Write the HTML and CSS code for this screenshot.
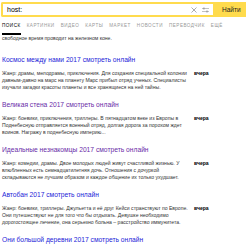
FILE: index.html
```html
<!DOCTYPE html>
<html lang="ru">
<head>
<meta charset="utf-8">
<link rel="stylesheet" href="styles.css">
</head>
<body>
<header class="head">
  <div class="search">
    <div class="field">
      <span class="query">host:</span>
      <span class="clear">
        <svg width="6" height="6" viewBox="0 0 6 6"><path d="M0.5 0.5L5.5 5.5M5.5 0.5L0.5 5.5" stroke="#888" stroke-width="0.7" fill="none"/></svg>
      </span>
      <span class="filter">
        <svg width="7" height="6" viewBox="0 0 7 6"><path d="M0 1.5H7M0 4.5H7" stroke="#999" stroke-width="0.6"/><rect x="1.2" y="0.6" width="1.4" height="1.8" fill="#999"/><rect x="4.3" y="3.6" width="1.4" height="1.8" fill="#999"/></svg>
      </span>
    </div>
    <div class="btn">Найти</div>
  </div>
  <nav class="tabs">
    <span class="tab active">Поиск</span>
    <span class="tab">Картинки</span>
    <span class="tab">Видео</span>
    <span class="tab">Карты</span>
    <span class="tab">Маркет</span>
    <span class="tab">Новости</span>
    <span class="tab">Переводчик</span>
    <span class="tab">Ещё</span>
  </nav>
</header>
<main class="results">
  <div class="intro">свободное время проводит на железном коне.</div>

  <div class="result">
    <a class="title">Космос между нами 2017 смотреть онлайн</a>
    <div class="body">
      <p class="snippet">Жанр: драмы, мелодрамы, приключения. Для создания специальной колонии<br>давным-давно на марс на планету Марс прибыл отряд ученых. Специалисты<br>изучали загадки красоты планеты и все хранящиеся на ней тайны.</p>
      <span class="date">вчера</span>
    </div>
  </div>

  <div class="result">
    <a class="title visited">Великая стена 2017 смотреть онлайн</a>
    <div class="body">
      <p class="snippet">Жанр: боевики, приключения, триллеры. В пятнадцатом веке из Европы в<br>Поднебесную отправляется военный отряд, долгая дорога за порохом ждет<br>воинов. Награжу в поднебесную империю...</p>
      <span class="date">вчера</span>
    </div>
  </div>

  <div class="result">
    <a class="title visited">Идеальные незнакомцы 2017 смотреть онлайн</a>
    <div class="body">
      <p class="snippet">Жанр: комедии, драмы. Двое молодых людей живут счастливой жизнью. У<br>влюбленных есть семнадцатилетняя дочь. Отношения с дочуркой<br>складываются не лучшим образом и каждое общение их только ухудшает.</p>
      <span class="date">вчера</span>
    </div>
  </div>

  <div class="result">
    <a class="title">Автобан 2017 смотреть онлайн</a>
    <div class="body">
      <p class="snippet">Жанр: боевики, триллеры. Джульетта и её друг Кейси странствуют по Европе.<br>Они путешествуют не для того что бы отдыхать. Девушке необходимо<br>дорогостоящее лечение, она серьезно больна – расстройство иммунитета.</p>
      <span class="date">вчера</span>
    </div>
  </div>

  <div class="result">
    <a class="title">Они большой деревни 2017 смотреть онлайн</a>
  </div>
</main>
</body>
</html>
```

FILE: styles.css
```css
html, body {
  margin: 0;
  padding: 0;
  background: #fff;
  font-family: "Liberation Sans", Arial, sans-serif;
  overflow: hidden;
}

.head {
  padding: 2px 0 0 1px;
}

.search {
  display: flex;
  height: 15px;
}

.field {
  flex: 1;
  display: flex;
  align-items: center;
  border: 2px solid #ffdb4d;
  border-right: none;
  border-radius: 2px 0 0 2px;
  padding: 0 0 0 4px;
  box-sizing: border-box;
}

.query {
  flex: 1;
  font-size: 7px;
  color: #000;
}

.clear {
  display: flex;
  margin-right: 5px;
}

.filter {
  display: flex;
  margin-right: 4px;
}

.btn {
  width: 33px;
  background: #ffdb4d;
  font-size: 6.5px;
  color: #222;
  display: flex;
  align-items: center;
  padding-left: 9px;
  box-sizing: border-box;
}

.tabs {
  display: flex;
  gap: 6px;
  padding: 5px 0 0 1px;
}

.tab {
  font-size: 4.6px;
  letter-spacing: 0.5px;
  text-transform: uppercase;
  color: #999;
  line-height: 8px;
  padding-bottom: 3px;
  border-bottom: 2px solid transparent;
}

.tab.active {
  color: #000;
  border-bottom-color: #000;
}

.results {
  padding-left: 2px;
}

.intro {
  font-size: 5.1px;
  line-height: 7px;
  color: #333;
}

.result {
  margin-top: 12.5px;
}

.result + .result {
  margin-top: 9px;
}

.title {
  display: block;
  font-size: 6.7px;
  line-height: 9px;
  color: #2424d8;
  white-space: nowrap;
}

.title.visited {
  color: #6a2ca8;
}

.body {
  display: flex;
  margin-top: 6px;
}

.snippet {
  margin: 0;
  width: 190px;
  font-size: 5.1px;
  line-height: 7px;
  color: #333;
  white-space: nowrap;
}

.date {
  margin-left: 2px;
  font-size: 5.1px;
  line-height: 7px;
  font-weight: bold;
  color: #000;
}
```
